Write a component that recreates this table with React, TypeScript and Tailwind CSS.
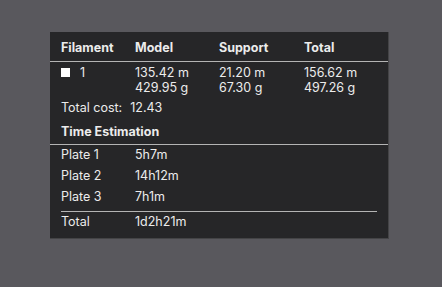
import React from "react";

const filaments = [
  { id: "1", color: "#ffffff", model: ["135.42 m", "429.95 g"], support: ["21.20 m", "67.30 g"], total: ["156.62 m", "497.26 g"] },
];

const plates = [
  { name: "Plate 1", time: "5h7m" },
  { name: "Plate 2", time: "14h12m" },
  { name: "Plate 3", time: "7h1m" },
];

export default function App() {
  return (
    <div className="w-[442px] h-[287px] bg-[#59585d] pt-[32px] pl-[50px] text-[12.5px] text-[#ececec] font-['Inter',sans-serif]">
      <div className="w-[339px] h-[207px] bg-[#262628] border-r border-b border-[#444446] flex flex-col">
        {/* Column headers */}
        <div className="h-[30px] shrink-0 flex items-center pl-[11px] pt-[3px] font-bold border-b border-[#b4b4b4]">
          <span className="w-[74px]">Filament</span>
          <span className="w-[84px]">Model</span>
          <span className="w-[85px]">Support</span>
          <span>Total</span>
        </div>

        {/* Filament usage */}
        {filaments.map((f) => (
          <div key={f.id} className="flex pl-[11px] pt-[3px] leading-[15px]">
            <div className="w-[74px] flex items-center h-[15px]">
              <span className="w-[9px] h-[9px] mr-[10px]" style={{ background: f.color }} />
              <span>{f.id}</span>
            </div>
            <div className="w-[84px] flex flex-col">
              {f.model.map((v) => <span key={v}>{v}</span>)}
            </div>
            <div className="w-[85px] flex flex-col">
              {f.support.map((v) => <span key={v}>{v}</span>)}
            </div>
            <div className="flex flex-col">
              {f.total.map((v) => <span key={v}>{v}</span>)}
            </div>
          </div>
        ))}

        <div className="pl-[11px] mt-[6px] h-[14px] leading-[14px] flex shrink-0">
          <span className="mr-[8px]">Total cost:</span>
          <span>12.43</span>
        </div>

        {/* Time estimation */}
        <div className="pl-[11px] mt-[10px] h-[20px] shrink-0 leading-[14px] font-bold border-b border-[#b4b4b4]">
          Time Estimation
        </div>

        <div className="flex flex-col">
          {plates.map((p) => (
            <div key={p.name} className="flex pl-[11px] h-[21px] shrink-0 items-center">
              <span className="w-[74px]">{p.name}</span>
              <span>{p.time}</span>
            </div>
          ))}
        </div>

        <div className="mx-[11px] mt-[3px] border-t border-[#b4b4b4]" />
        <div className="flex pl-[11px] h-[21px] shrink-0 items-center">
          <span className="w-[74px]">Total</span>
          <span>1d2h21m</span>
        </div>
      </div>
    </div>
  );
}
